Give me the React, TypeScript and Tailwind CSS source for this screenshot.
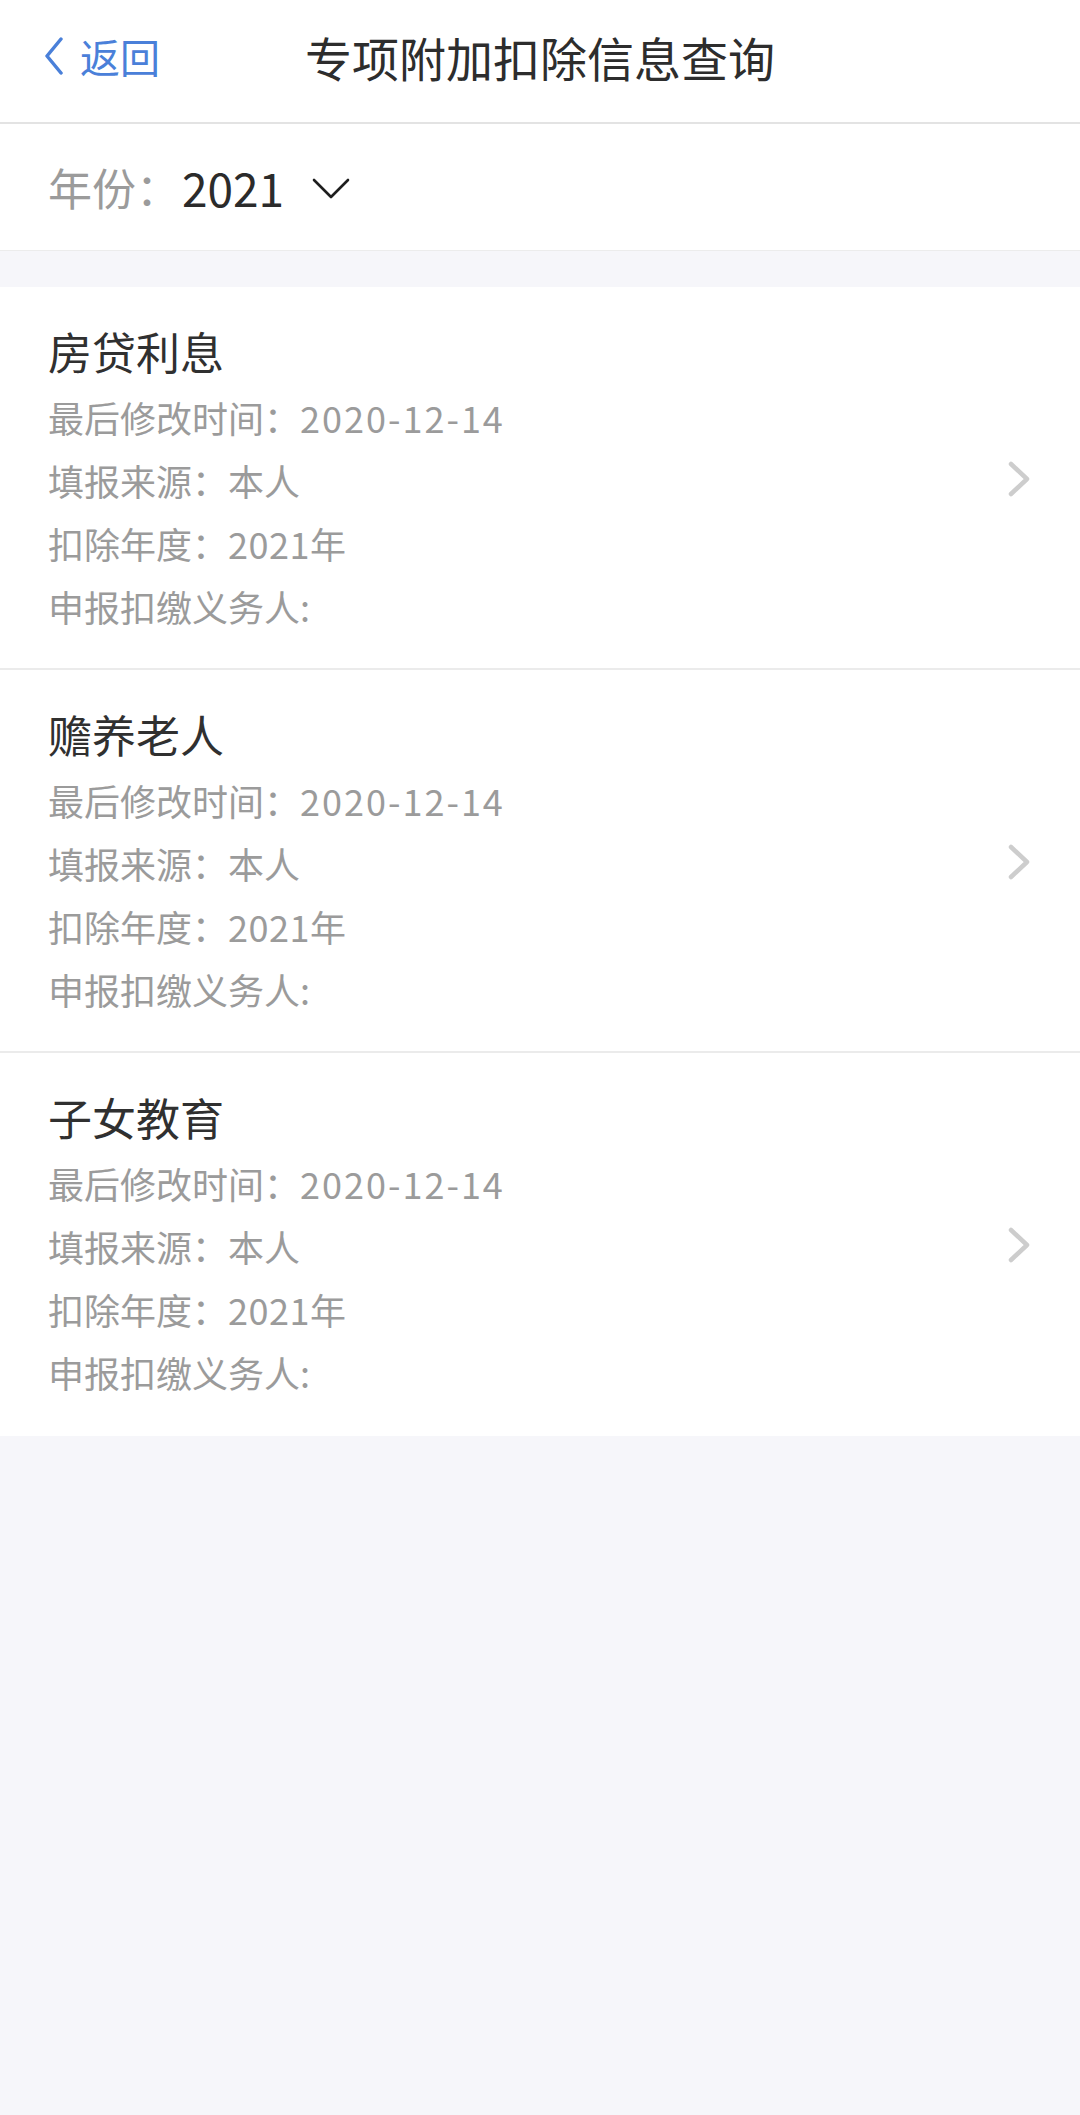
import React from "react";

const items = [
  { title: "房贷利息" },
  { title: "赡养老人" },
  { title: "子女教育" },
];

function ChevronRight() {
  return (
    <svg width="24" height="36" viewBox="0 0 24 36" fill="none">
      <polyline points="4,3 20,18 4,33" stroke="#cdcdcd" strokeWidth="4.5" strokeLinecap="round" strokeLinejoin="round" />
    </svg>
  );
}

function Card({ title, last }: { title: string; last: boolean }) {
  return (
    <div
      className={`flex items-center bg-white pl-[48px] pr-[49px] pt-[32px] ${
        last ? "pb-[32px]" : "pb-[30px] border-b-2 border-[#ebebeb]"
      }`}
    >
      <div className="flex flex-1 flex-col">
        <div className="text-[44px] leading-[64px] text-[#303030]">{title}</div>
        <div className="mt-[3px] flex flex-col text-[36px] leading-[63px] text-[#9b9b9b]">
          <div>
            最后修改时间：<span className="tracking-[2px]">2020-12-14</span>
          </div>
          <div>填报来源：本人</div>
          <div>
            扣除年度：<span className="tracking-[0.5px]">2021</span>年
          </div>
          <div>申报扣缴义务人:</div>
        </div>
      </div>
      <ChevronRight />
    </div>
  );
}

export default function App() {
  return (
    <div className="flex min-h-[2115px] w-[1080px] flex-col bg-[#f6f6fa] font-['Noto_Sans_CJK_SC','Noto_Sans',sans-serif]">
      <header className="grid h-[124px] grid-cols-[1fr_auto_1fr] items-center border-b-2 border-[#e3e3e3] bg-white pb-[10px]">
        <div className="flex items-center gap-[16px] pl-[44px] text-[#4a80d9]">
          <svg width="20" height="38" viewBox="0 0 20 38" fill="none">
            <polyline points="17,2 3,19 17,36" stroke="#4a80d9" strokeWidth="3.5" strokeLinecap="round" strokeLinejoin="round" />
          </svg>
          <span className="text-[40px] leading-none">返回</span>
        </div>
        <h1 className="text-[47px] leading-none text-[#2d2d2d]">专项附加扣除信息查询</h1>
        <div />
      </header>
      <div className="flex h-[127px] items-center border-b border-[#ececec] bg-white pl-[48px]">
        <span className="text-[44px] text-[#9b9b9b]">年份：</span>
        <span className="ml-[2px] text-[46px] text-[#2b2b2b]">2021</span>
        <svg className="ml-[28px] mt-[4px]" width="38" height="22" viewBox="0 0 38 22" fill="none">
          <polyline points="2,2 19,19 36,2" stroke="#1e1e1e" strokeWidth="2.6" strokeLinecap="round" strokeLinejoin="round" />
        </svg>
      </div>
      <div className="h-[36px]" />
      {items.map((it, i) => (
        <Card key={it.title} title={it.title} last={i === items.length - 1} />
      ))}
    </div>
  );
}
